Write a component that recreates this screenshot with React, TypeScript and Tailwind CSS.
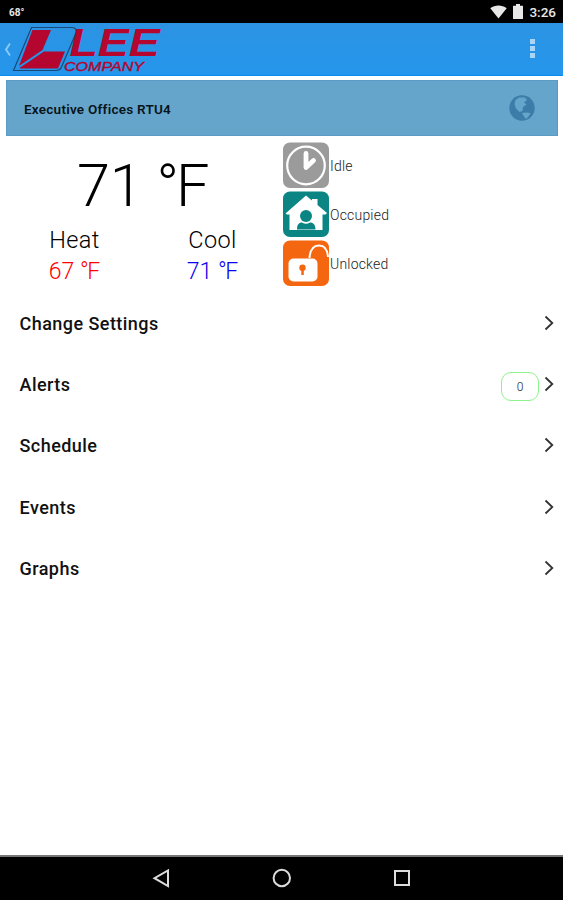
import type { ReactNode } from 'react';

interface StatusRowProps {
  label: string;
  children: ReactNode;
}

interface SetpointProps {
  label: string;
  value: number;
  className: string;
}

const MENU = [
  { label: 'Change Settings' },
  { label: 'Alerts', count: 0 },
  { label: 'Schedule' },
  { label: 'Events' },
  { label: 'Graphs' },
];

function StatusBar() {
  return (
    <div className="flex h-[23px] shrink-0 items-center bg-black pl-[9px] pr-[7px] text-[#e8e8e8]">
      <span className="mt-[2px] text-[10px] font-bold leading-none">68°</span>
      <svg className="ml-auto h-[14px] w-[17px]" viewBox="0 0 17 14" fill="currentColor">
        <path d="M0.3 3.2C5 -0.3 12 -0.3 16.7 3.2L8.5 13.5z" />
      </svg>
      <svg className="ml-[6px] h-[15px] w-[10px]" viewBox="0 0 10 15" fill="currentColor">
        <path d="M3 0h4v1.8h2.5a.5.5 0 0 1 .5.5V14.5a.5.5 0 0 1-.5.5h-9a.5.5 0 0 1-.5-.5V2.3a.5.5 0 0 1 .5-.5H3z" />
      </svg>
      <span className="ml-[6px] mt-[2px] text-[13.5px] font-medium leading-none">3:26</span>
    </div>
  );
}

function Logo() {
  return (
    <svg className="h-[52px] w-[156px] overflow-visible" viewBox="0 0 156 52" fontFamily="'Liberation Sans', Arial, sans-serif" fill="#b4062f">
      <path d="M27.5 4.5H68Q73.5 5 72 10L57.5 44Q56 47.5 52 47.5H9.5z" fill="none" stroke="#174a78" strokeWidth="1.2" />
      <path d="M28.5 7H47L38.5 27L15 43z" />
      <path d="M40 28.500H61L54 45.500H16L15.700 44.700z" />
      <text x="65.5" y="33" fontSize="39.5" fontWeight="bold" fontStyle="italic" textLength="90" lengthAdjust="spacingAndGlyphs">LEE</text>
      <text x="60" y="47.8" fontSize="13.5" fontStyle="italic" stroke="#b4062f" strokeWidth="0.4" textLength="80" lengthAdjust="spacingAndGlyphs">COMPANY</text>
    </svg>
  );
}

function AppBar() {
  return (
    <div className="flex h-[53px] shrink-0 border-b border-[#0a8cf0] bg-linear-to-b from-[#2c93e2] to-[#2496ec] pl-[4px]">
      <svg className="-mr-[8px] mt-[19px] h-[15px] w-[8px]" viewBox="0 0 8 15" fill="none" stroke="#8ccbf8" strokeWidth="1.8">
        <path d="M6 1.5L2 7.5L6 13.5" />
      </svg>
      <Logo />
      <div className="ml-auto mr-[28px] mt-[16px] flex flex-col gap-[2px]">
        <span className="size-[5px] bg-[#a9d6f8]" />
        <span className="size-[5px] bg-[#a9d6f8]" />
        <span className="size-[5px] bg-[#a9d6f8]" />
      </div>
    </div>
  );
}

function TitleBar() {
  return (
    <div className="ml-[6px] mr-[5px] mt-[4px] flex h-[56px] shrink-0 items-center justify-between border border-[#5a9ac4] bg-[#66a5cb] pl-[17px] pr-[22px]">
      <span className="mt-[2px] text-[13.5px] font-semibold tracking-[0.25px] text-[#08141c]">Executive Offices RTU4</span>
      <svg className="size-[26px]" viewBox="0 0 26 26">
        <circle cx="13" cy="13" r="12.7" fill="#3b7ca8" />
        <path d="M6.500 5L10 2.500L16 2.500L18 5L15 7.500L17.500 9.500L14 12L13.500 16L10.500 17L7 13.500L5.500 9z" fill="#66a5cb" />
        <path d="M13 18L17 17.5L21.5 18L19.500 21.500L17 24L15 21.5z" fill="#66a5cb" />
      </svg>
    </div>
  );
}

function Setpoint({ label, value, className }: SetpointProps) {
  return (
    <div className="flex w-[138px] flex-col items-center">
      <span className="text-[23.5px] font-light leading-[31px] tracking-[0.4px] text-black">{label}</span>
      <span className={`text-[23px] font-[350] leading-[32px] ${className}`}>
        {value} <span className="-tracking-[1.5px]">°</span>F
      </span>
    </div>
  );
}

function StatusRow({ label, children }: StatusRowProps) {
  return (
    <div className="flex h-[46px] items-center gap-[1px]">
      <svg className="size-[46px]" viewBox="0 0 46 46">
        {children}
      </svg>
      <span className="mt-px text-sm font-light tracking-[0.2px] text-[#222]">{label}</span>
    </div>
  );
}

function Overview() {
  return (
    <div className="flex h-[156px] shrink-0">
      <div className="w-[283px]">
        <div className="mt-[15px] pl-[77px] text-[59.5px] font-[350] leading-[70px] tracking-[-0.3px] text-black">
          71 <span className="-tracking-[3px]">°</span>F
        </div>
        <div className="mt-[4px] flex pl-[5.5px]">
          <Setpoint label="Heat" value={67} className="text-[#ff0000]" />
          <Setpoint label="Cool" value={71} className="text-[#0a00f0]" />
        </div>
      </div>
      <div className="flex flex-col gap-[3px] pt-[6px]">
        <StatusRow label="Idle">
          <rect y="0.5" width="46" height="45.5" rx="7" fill="#9b9b9b" />
          <circle cx="23" cy="23.5" r="18.8" fill="none" stroke="#fff" strokeWidth="2.2" />
          <path d="M23 11.5V25.5L30.5 18.5" fill="none" stroke="#fff" strokeWidth="4.8" strokeLinecap="round" strokeLinejoin="round" />
        </StatusRow>
        <StatusRow label="Occupied">
          <rect y="0.5" width="46" height="45.5" rx="7" fill="#0b8484" />
          <path d="M2.5 22.5L23 4.5L29 9.5V8H34.5V14L44 22L42.5 23.5H39.5V39H6.5V23.5H4z" fill="#fff" />
          <circle cx="23" cy="25" r="6" fill="#0b8484" />
          <path d="M14 38.5C14 33 16.5 31.5 19 31.5Q23 34 27 31.5C29.5 31.5 32.5 33 32.5 38.5z" fill="#0b8484" />
        </StatusRow>
        <StatusRow label="Unlocked">
          <rect y="0.5" width="46" height="45.5" rx="7" fill="#f4660f" />
          <rect x="5.5" y="18.5" width="29" height="23" rx="5" fill="#fff" />
          <path d="M26.5 18C27 10 30 5.5 36 5.5C41.5 5.5 44.5 9 45 17" fill="none" stroke="#fff" strokeWidth="2" />
          <circle cx="19.5" cy="27.8" r="3.2" fill="#f4660f" />
          <path d="M18.3 29h2.5v6h-2.5z" fill="#f4660f" />
        </StatusRow>
      </div>
    </div>
  );
}

function Menu() {
  return (
    <div className="pt-[1px]">
      {MENU.map((item) => (
        <div key={item.label} className="flex h-[61.4px] items-center pl-[19.5px] pr-[9px]">
          <span className="text-lg font-medium tracking-[0.45px] text-[#111]">{item.label}</span>
          {item.count !== undefined && (
            <span className="ml-auto mt-[3px] flex h-[29px] w-[38px] items-center justify-center rounded-[10px] border-[1.5px] border-[#8cf48c] text-xs font-light text-[#222]">
              {item.count}
            </span>
          )}
          <svg
            className={`h-[16px] w-[10px] -translate-y-px ${item.count !== undefined ? 'ml-[5px]' : 'ml-auto'}`}
            viewBox="0 0 10 16"
            fill="none"
            stroke="#333"
            strokeWidth="1.8"
          >
            <path d="M1.5 1.5L8.3 8L1.5 14.5" />
          </svg>
        </div>
      ))}
    </div>
  );
}

function NavBar() {
  return (
    <div className="mt-auto h-[45px] shrink-0 border-t-2 border-[#777] bg-black">
      <svg className="h-[43px] w-full" viewBox="0 0 563 43" fill="none" stroke="#dcdcdc" strokeWidth="2">
        <path d="M168 13.5V29L154.5 21.2z" />
        <circle cx="281.8" cy="21" r="8.2" />
        <rect x="395" y="14" width="14" height="14" />
      </svg>
    </div>
  );
}

export default function App() {
  return (
    <div className="flex h-[900px] w-[563px] flex-col overflow-hidden bg-white font-['Roboto',sans-serif]">
      <StatusBar />
      <AppBar />
      <TitleBar />
      <Overview />
      <Menu />
      <NavBar />
    </div>
  );
}
